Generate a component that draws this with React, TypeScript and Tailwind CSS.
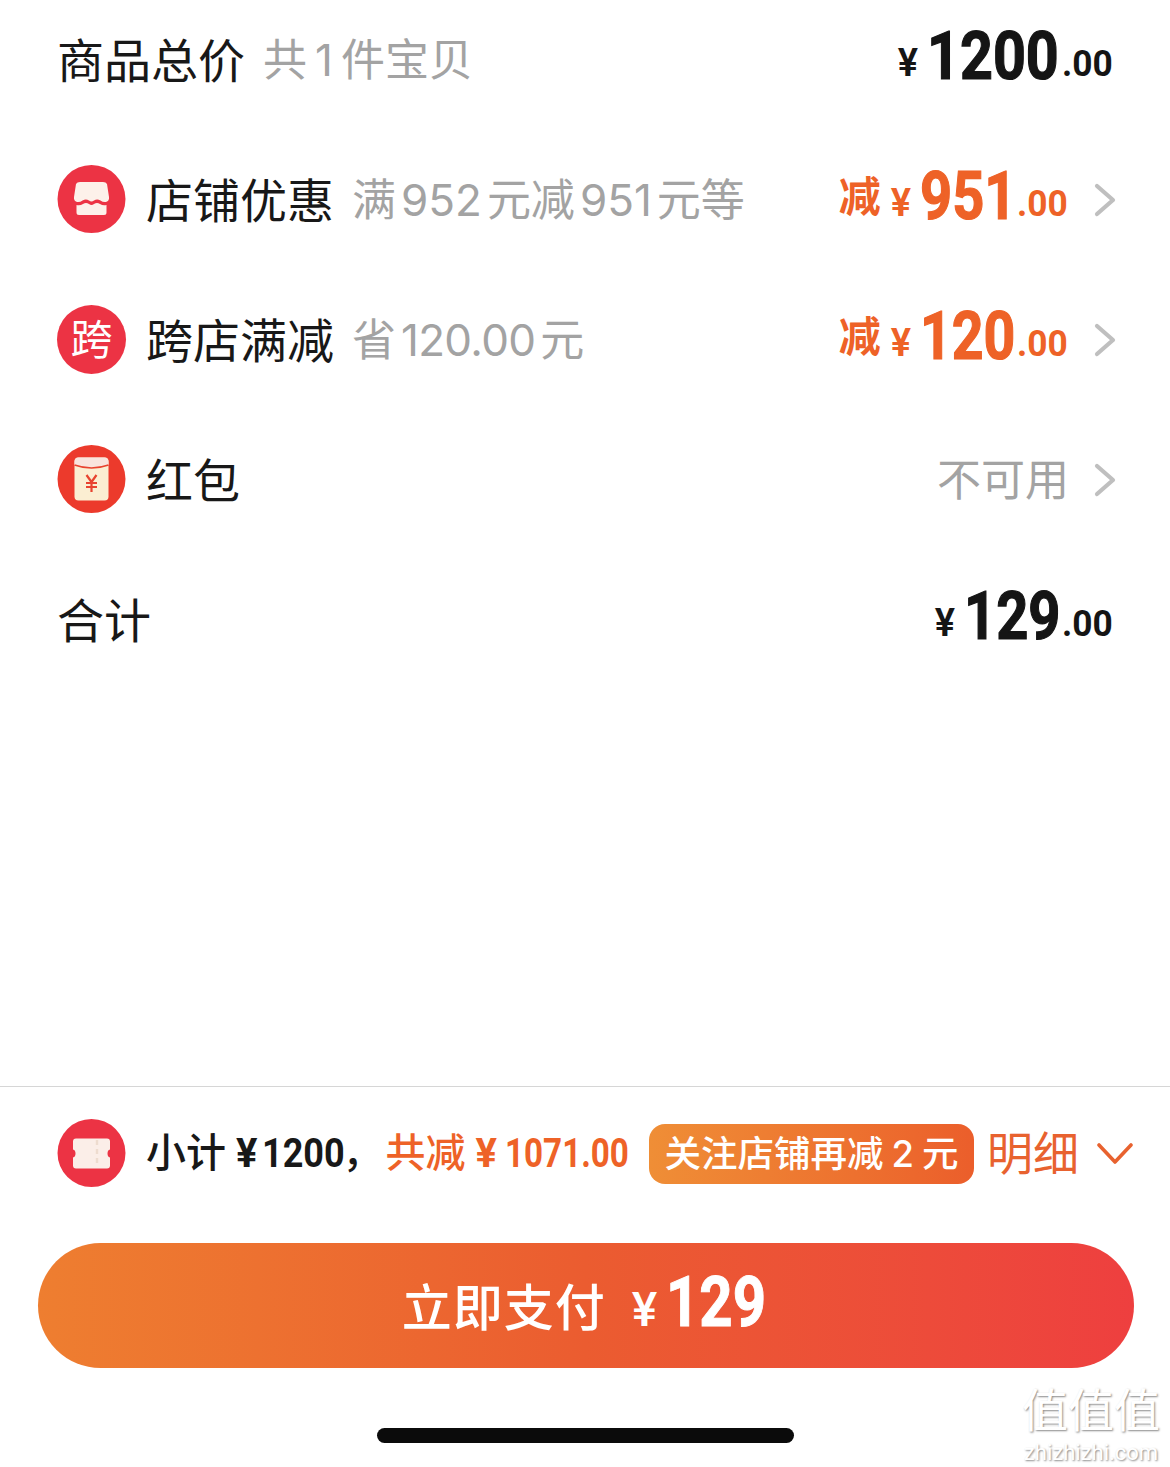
const cjk = "font-['Inter','Noto_Sans_CJK_SC','Noto_Sans',sans-serif]";
const din = "font-['Roboto',sans-serif]";

function Cond({ w, s, children }: { w: string; s: string; children: React.ReactNode }) {
  return (
    <span className={`inline-block whitespace-nowrap ${w}`}>
      <span className={`inline-block origin-left ${s}`}>{children}</span>
    </span>
  );
}

function Chevron({ className = "" }: { className?: string }) {
  return (
    <svg width="22" height="34" viewBox="0 0 22 34" fill="none" className={className}>
      <path d="M3 3 L19 17 L3 31" stroke="#bfbfbf" strokeWidth="4.2" strokeLinecap="round" strokeLinejoin="round" />
    </svg>
  );
}

function Amount({ int, color, w, s }: { int: string; color: string; w: string; s: string }) {
  return (
    <span className={`flex items-baseline pb-[6px] ${din} font-bold ${color}`}>
      <span className="text-[38px] font-semibold mr-[9px] leading-none -translate-y-[3px]">¥</span>
      <span className="text-[66px] leading-none [-webkit-text-stroke:1.2px_currentColor]">
        <Cond w={w} s={s}>{int}</Cond>
      </span>
      <span className="text-[36px] leading-none ml-[5px] -translate-y-[3px]">
        <Cond w="w-[49px]" s="scale-x-[0.98]">.00</Cond>
      </span>
    </span>
  );
}

function ShopIcon() {
  return (
    <svg width="70" height="70" viewBox="0 0 70 70">
      <circle cx="34.5" cy="34" r="34" fill="#ec3344" />
      <path d="M23 17 H46 Q49 17 50 19 L52 32 Q52.5 36 49 37 Q46 37.5 43.5 35.5 Q40 33.5 37 35.5 Q34.5 37.5 32 35.5 Q29 33.5 25.5 35.5 Q23 37.5 20 37 Q16.5 36 17 32 L19 19 Q20 17 23 17 Z" fill="#fdf1ea" />
      <path d="M19.5 40 Q23 41 26 39 Q29 37 32 39 Q34.5 41 37 39 Q40 37 43 39 Q46 41 49.5 40 V47.5 Q49.5 50 47 50 H22 Q19.5 50 19.5 47.5 Z" fill="#fdf1ea" />
    </svg>
  );
}

function EnvelopeIcon() {
  return (
    <svg width="70" height="70" viewBox="0 0 70 70">
      <circle cx="34.5" cy="34" r="34" fill="#ec3a2c" />
      <rect x="17.5" y="12.5" width="34" height="43" rx="4" fill="#fbeed2" />
      <path d="M17.5 17 Q17.5 12.5 21.5 12.5 H47.5 Q51.5 12.5 51.5 17 V20 Q34.5 26 17.5 20 Z" fill="#f9e4dd" />
      <path d="M17.5 20 Q34.5 26 51.5 20" stroke="#e8432f" strokeWidth="1.6" fill="none" />
      <path d="M29.5 30 L34.5 37 L39.5 30 M29 38 H40 M29 42 H40 M34.5 37 V47" stroke="#e8432f" strokeWidth="2.2" fill="none" />
    </svg>
  );
}

function TicketIcon() {
  return (
    <svg width="70" height="70" viewBox="0 0 70 70">
      <circle cx="34.5" cy="34" r="34" fill="#ec3344" />
      <path d="M19 19.5 H50 Q53 19.5 53 22.5 V30.5 Q50.5 31 50.5 34.5 Q50.5 38 53 38.5 V46.5 Q53 49.5 50 49.5 H19 Q16 49.5 16 46.5 V38.5 Q18.5 38 18.5 34.5 Q18.5 31 16 30.5 V22.5 Q16 19.5 19 19.5 Z" fill="#fbeee8" />
      <path d="M40 21 V48" stroke="#eedccf" strokeWidth="2.4" strokeDasharray="5 4" />
    </svg>
  );
}

function Row({ icon, label, sub, right }: { icon?: React.ReactNode; label: string; sub?: React.ReactNode; right: React.ReactNode }) {
  return (
    <div className="h-[120px] flex items-center pl-[57px]">
      {icon && <div className="w-[70px] h-[70px] mr-[19px] shrink-0">{icon}</div>}
      <span className="text-[47px] leading-none text-[#181818]">{label}</span>
      {sub && <span className="ml-[18px] text-[44px] leading-none text-[#a3a3a3] whitespace-nowrap">{sub}</span>}
      <div className="ml-auto flex items-center">{right}</div>
    </div>
  );
}

function Discount({ int, w, s }: { int: string; w: string; s: string }) {
  return (
    <div className="flex items-center pr-[54px]">
      <span className="pb-[6px] text-[42px] leading-none font-bold text-[#ee6227] mr-[10px]">减</span>
      <Amount int={int} color="text-[#ee6227]" w={w} s={s} />
      <Chevron className="ml-[28px]" />
    </div>
  );
}

export default function App() {
  return (
    <div className={`w-[1170px] h-[1467px] bg-white relative overflow-hidden flex flex-col ${cjk}`}>
      <div className="h-[1086px] flex flex-col gap-[20px] border-b border-[#d6d6d6] box-content">
        <Row
          label="商品总价"
          sub={<>共<span className="mx-[8px]">1</span>件宝贝</>}
          right={<div className="pr-[59px]"><Amount int="1200" color="text-[#151515]" w="w-[130px]" s="scale-x-[0.87]" /></div>}
        />
        <Row
          icon={<ShopIcon />}
          label="店铺优惠"
          sub={<>满<span className="mx-[5px]">952</span>元减<span className="mx-[5px]">951</span>元等</>}
          right={<Discount int="951" w="w-[92px]" s="scale-x-[0.85]" />}
        />
        <Row
          icon={
            <div className="w-[69px] h-[69px] rounded-full bg-[#ec3344] text-white text-[42px] leading-none flex items-center justify-center">跨</div>
          }
          label="跨店满减"
          sub={<>省<span className="mx-[5px] tracking-[-0.7px]">120.00</span>元</>}
          right={<Discount int="120" w="w-[92px]" s="scale-x-[0.84]" />}
        />
        <Row
          icon={<EnvelopeIcon />}
          label="红包"
          right={
            <div className="flex items-center pr-[54px]">
              <span className="text-[44px] leading-none text-[#a3a3a3]">不可用</span>
              <Chevron className="ml-[25px]" />
            </div>
          }
        />
        <Row
          label="合计"
          right={<div className="pr-[59px]"><Amount int="129" color="text-[#151515]" w="w-[93px]" s="scale-x-[0.85]" /></div>}
        />
      </div>

      <div className="h-[134px] flex items-center pl-[57px]">
        <div className="w-[70px] h-[70px] mr-[19px] shrink-0"><TicketIcon /></div>
        <span className="pb-[2px] flex items-baseline text-[40px] leading-none font-medium text-[#181818] whitespace-nowrap">
          小计
          <span className={`ml-[10px] mr-[5px] font-bold ${din}`}>¥</span>
          <span className={`font-bold ${din}`}><Cond w="w-[80px]" s="scale-x-[0.9]">1200</Cond></span>
          <span>，</span>
        </span>
        <span className="pb-[2px] ml-[3px] flex items-baseline text-[40px] leading-none font-medium text-[#ee6227] whitespace-nowrap">
          共减
          <span className={`ml-[10px] mr-[8px] font-bold ${din}`}>¥</span>
          <span className={`font-bold ${din}`}><Cond w="w-[122px]" s="scale-x-[0.83]">1071.00</Cond></span>
        </span>
        <span className="ml-[22px] h-[60px] w-[325px] rounded-[16px] bg-linear-to-r from-[#ef8e36] to-[#eb5e2b] text-white text-[36.5px] font-medium leading-none flex items-center justify-center whitespace-nowrap">
          关注店铺再减<span className="mx-[8px]">2</span>元
        </span>
        <span className="pb-[2px] ml-[13px] text-[46px] leading-none text-[#e8622f] whitespace-nowrap">明细</span>
        <svg width="36" height="24" viewBox="0 0 36 24" fill="none" className="ml-[18px] -mt-[2px]">
          <path d="M2 4 L18 21 L34 4" stroke="#e8622f" strokeWidth="3.6" strokeLinecap="round" strokeLinejoin="round" />
        </svg>
      </div>

      <div className="mt-[22px] ml-[38px] w-[1096px] h-[125px] rounded-full bg-linear-to-r from-[#ee7e30] via-[#eb5c30] to-[#ee3f3f] flex items-baseline justify-center text-white pt-[24px] pr-[6px]">
        <span className="text-[50px] font-medium leading-none tracking-[1px]">立即支付</span>
        <span className={`ml-[26px] text-[48px] font-medium leading-none ${din}`}>¥</span>
        <span className={`ml-[9px] text-[70px] font-bold leading-none ${din} [-webkit-text-stroke:1px_currentColor]`}>
          <Cond w="w-[98px]" s="scale-x-[0.83]">129</Cond>
        </span>
      </div>

      <div className="mt-[60px] mx-auto w-[417px] h-[15px] rounded-full bg-[#0b0b0b]" />

      <div className="absolute left-[1021px] top-[1387px] w-[140px] flex flex-col items-center text-white [text-shadow:1px_1px_2px_#8a8a8a]">
        <span className="text-[46px] leading-none whitespace-nowrap">值值值</span>
        <span className={`text-[22px] leading-none mt-[9px] ${din}`}>zhizhizhi.com</span>
      </div>
    </div>
  );
}
